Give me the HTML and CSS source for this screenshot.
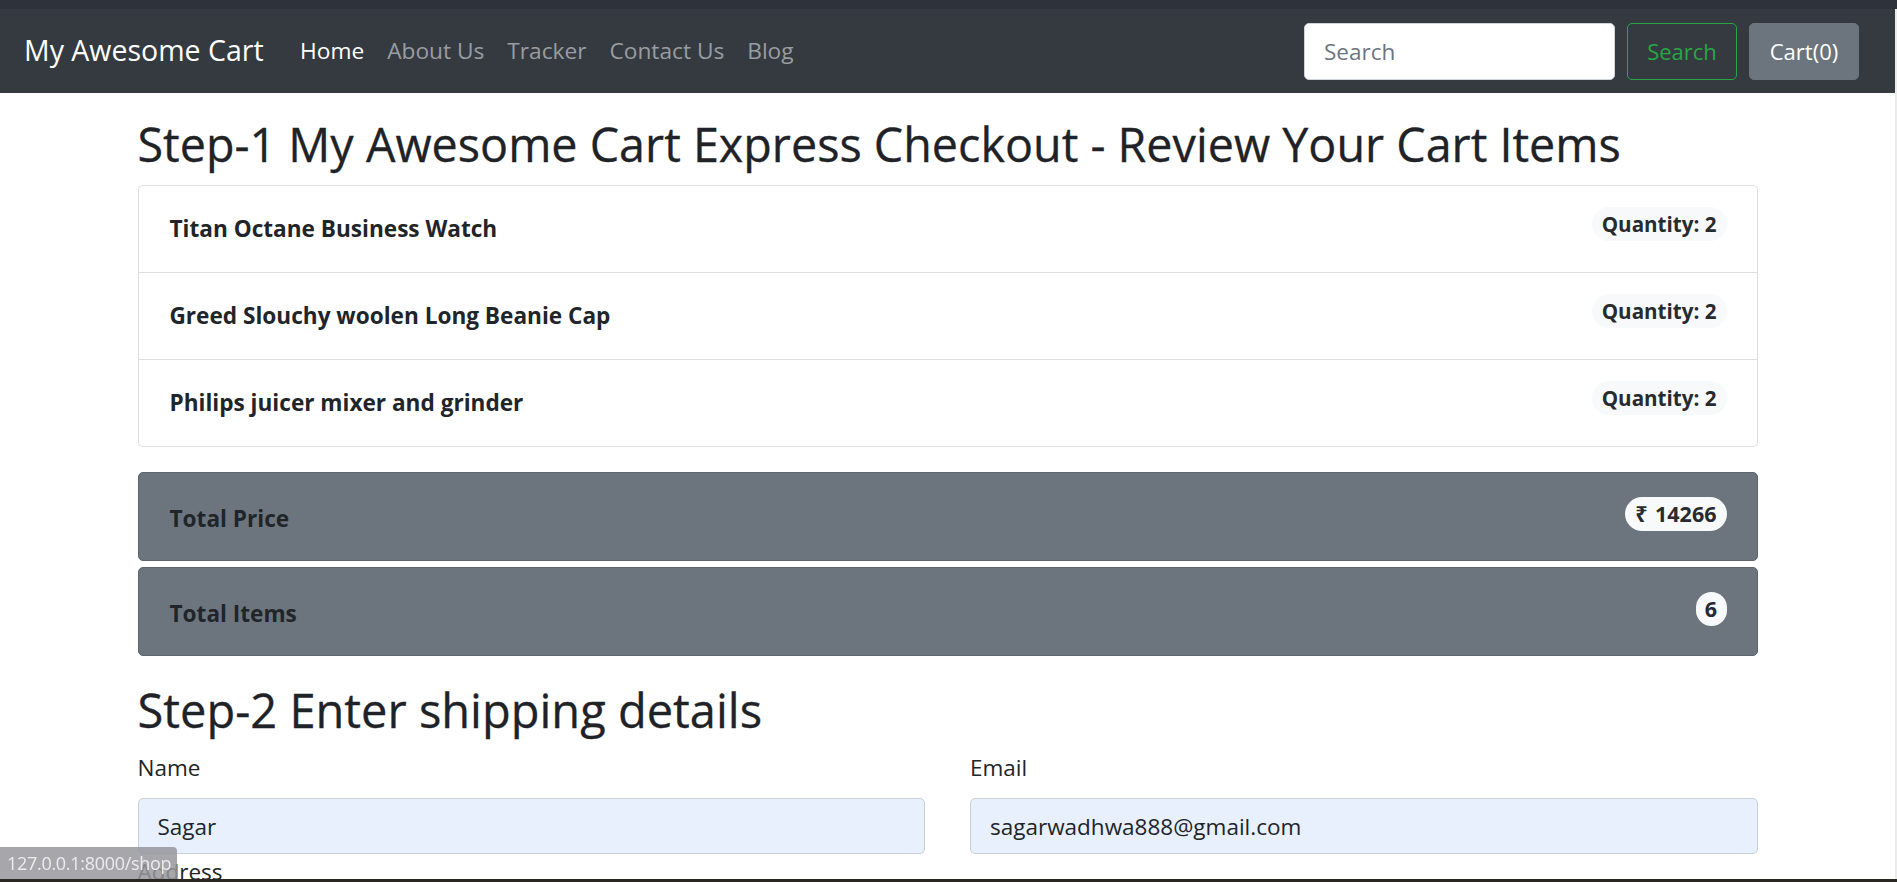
FILE: index.html
```html
<!DOCTYPE html>
<html lang="en">
<head>
<meta charset="utf-8">
<title>Checkout - My Awesome Cart</title>
<link rel="stylesheet" href="styles.css">
</head>
<body>
<div class="topband"></div>
<div class="page">
  <nav class="navbar">
    <a class="brand" href="#">My Awesome Cart</a>
    <ul class="nav-links">
      <li><a class="nav-link active" href="#">Home</a></li>
      <li><a class="nav-link" href="#">About Us</a></li>
      <li><a class="nav-link" href="#">Tracker</a></li>
      <li><a class="nav-link" href="#">Contact Us</a></li>
      <li><a class="nav-link" href="#">Blog</a></li>
    </ul>
    <form class="nav-search">
      <input class="search-input" type="search" placeholder="Search">
      <button class="btn btn-outline-success" type="button">Search</button>
      <button class="btn btn-secondary" type="button">Cart(0)</button>
    </form>
  </nav>

  <main class="container">
    <h1 class="step-title step-one">Step-1 My Awesome Cart Express Checkout - Review Your Cart Items</h1>
    <ul class="cart-list">
      <li class="cart-item"><span class="item-name">Titan Octane Business Watch</span><span class="badge">Quantity: 2</span></li>
      <li class="cart-item"><span class="item-name">Greed Slouchy woolen Long Beanie Cap</span><span class="badge">Quantity: 2</span></li>
      <li class="cart-item"><span class="item-name">Philips juicer mixer and grinder</span><span class="badge">Quantity: 2</span></li>
    </ul>
    <div class="total-box"><span class="total-label">Total Price</span><span class="badge badge-white">₹ 14266</span></div>
    <div class="total-box"><span class="total-label">Total Items</span><span class="badge badge-white badge-round">6</span></div>

    <h1 class="step-title step-two">Step-2 Enter shipping details</h1>
    <form class="ship-form">
      <div class="form-row">
        <div class="form-group">
          <label class="form-label" for="name">Name</label>
          <input class="form-control filled" id="name" type="text" value="Sagar">
        </div>
        <div class="form-group">
          <label class="form-label" for="email">Email</label>
          <input class="form-control filled" id="email" type="email" value="sagarwadhwa888@gmail.com">
        </div>
      </div>
      <div class="form-group full">
        <label class="form-label" for="address">Address</label>
        <input class="form-control" id="address" type="text" placeholder="1234 Main St">
      </div>
      <div class="form-group full">
        <label class="form-label" for="address2">Address line 2</label>
        <input class="form-control" id="address2" type="text" placeholder="Apartment, studio, or floor">
      </div>
    </form>
  </main>
</div>
<div class="scroll-edge"></div>
<div class="status-bar">127.0.0.1:8000/shop</div>
<div class="bottom-edge"></div>
</body>
</html>
```
FILE: styles.css
```css
* { box-sizing: border-box; }

html, body {
  margin: 0;
  padding: 0;
  background: #fff;
}

body {
  font-family: "Open Sans", "Noto Sans", sans-serif;
  font-size: 22.5px;
  color: #212529;
}

.topband {
  height: 9px;
  background: #2e323b;
}

.page {
  margin-right: 2px;
}

/* ---------- navbar ---------- */
.navbar {
  height: 84px;
  background: #343a40;
  display: flex;
  align-items: center;
  padding: 0 36px 0 24px;
}

.brand {
  font-size: 28.5px;
  line-height: 40px;
  color: #fff;
  text-decoration: none;
  margin-right: 25px;
  margin-top: -2px;
}

.nav-links {
  list-style: none;
  display: flex;
  margin: 0;
  padding: 0;
  flex: 1;
}

.nav-link {
  display: block;
  font-size: 22.7px;
  line-height: 36px;
  padding: 0 11.5px;
  color: #9a9da0;
  text-decoration: none;
}

.nav-link.active {
  color: #fff;
}

.nav-search {
  display: flex;
  align-items: center;
  gap: 12px;
}

.search-input {
  width: 311px;
  height: 57px;
  border: 1px solid #ced4da;
  border-radius: 5px;
  background: #fff;
  font-family: inherit;
  font-size: 22.5px;
  padding: 0 19px;
  color: #495057;
}

.search-input::placeholder {
  color: #6c757d;
}

.btn {
  height: 57px;
  width: 110px;
  border-radius: 5px;
  font-family: inherit;
  font-size: 22px;
  padding: 0;
  cursor: pointer;
}

.btn-outline-success {
  background: transparent;
  border: 1px solid #28a745;
  color: #28a745;
}

.btn-secondary {
  background: #6c757d;
  border: 1px solid #6c757d;
  color: #fff;
}

/* ---------- main ---------- */
.container {
  width: 1620px;
  margin: 0 auto;
}

.step-title {
  font-weight: 400;
  font-size: 46.7px;
  line-height: 56px;
  margin: 0;
  color: #1f2327;
  white-space: nowrap;
  -webkit-text-stroke: 0.3px #1f2327;
}

.step-one {
  margin-top: 23px;
  margin-bottom: 13px;
}

.step-two {
  margin-top: 26px;
  margin-bottom: 15px;
  font-size: 47px;
}

.cart-list {
  list-style: none;
  margin: 0;
  padding: 0;
  border: 1px solid #dfdfdf;
  border-radius: 5px;
}

.cart-item {
  height: 87px;
  display: flex;
  align-items: center;
  justify-content: space-between;
  padding: 0 30px 0 31px;
  border-top: 1px solid #dfdfdf;
}

.cart-item:first-child {
  border-top: none;
  height: 86px;
}

.item-name,
.total-label {
  font-weight: 700;
  font-size: 22.6px;
  line-height: 30px;
}

.badge {
  display: inline-block;
  height: 34px;
  line-height: 34px;
  padding: 0 10px;
  border-radius: 17px;
  background: #f8f9fa;
  color: #272b30;
  font-weight: 700;
  font-size: 20.6px;
  margin-bottom: 10px;
  white-space: nowrap;
}

.total-box {
  height: 89px;
  margin-top: 25px;
  background: #6c757d;
  border: 1px solid #5d646b;
  border-radius: 5px;
  display: flex;
  align-items: center;
  justify-content: space-between;
  padding: 0 30px 0 31px;
}

.total-box + .total-box {
  margin-top: 6px;
}

.total-label {
  padding-top: 4px;
  color: #212529;
}

.total-box .badge {
  margin-bottom: 6px;
  padding: 0 10px;
  font-size: 21.5px;
}

.badge-white {
  word-spacing: 2px;
}

.badge-round {
  width: 31px;
  padding: 0;
  text-align: center;
}

.total-box .badge-round {
  padding: 0;
}

/* ---------- form ---------- */
.ship-form {
  padding-bottom: 60px;
}

.form-row {
  display: grid;
  grid-template-columns: 1fr 1fr;
  column-gap: 45px;
}

.form-group {
  display: flex;
  flex-direction: column;
  margin-bottom: 3px;
}

.form-label {
  font-size: 22.5px;
  line-height: 30px;
  margin-bottom: 15px;
  color: #212529;
}

.form-control {
  height: 56px;
  border: 1px solid #c9d0da;
  border-radius: 5px;
  background: #fff;
  font-family: inherit;
  font-size: 22.5px;
  padding: 0 19px;
  color: #212529;
}

.form-control.filled {
  background: #e8f0fe;
}

/* ---------- window overlays ---------- */
.scroll-edge {
  position: fixed;
  top: 9px;
  right: 0;
  bottom: 0;
  width: 2px;
  background: #ececec;
}

.status-bar {
  position: fixed;
  left: 0;
  bottom: 3px;
  width: 177px;
  height: 32px;
  padding-left: 7px;
  background: rgba(150, 150, 156, 0.85);
  border-top-right-radius: 4px;
  color: #ececec;
  font-size: 18px;
  letter-spacing: -0.3px;
  line-height: 32px;
  white-space: nowrap;
  overflow: hidden;
}

.bottom-edge {
  position: fixed;
  left: 0;
  right: 0;
  bottom: 0;
  height: 3px;
  background: #2a2622;
}
```
